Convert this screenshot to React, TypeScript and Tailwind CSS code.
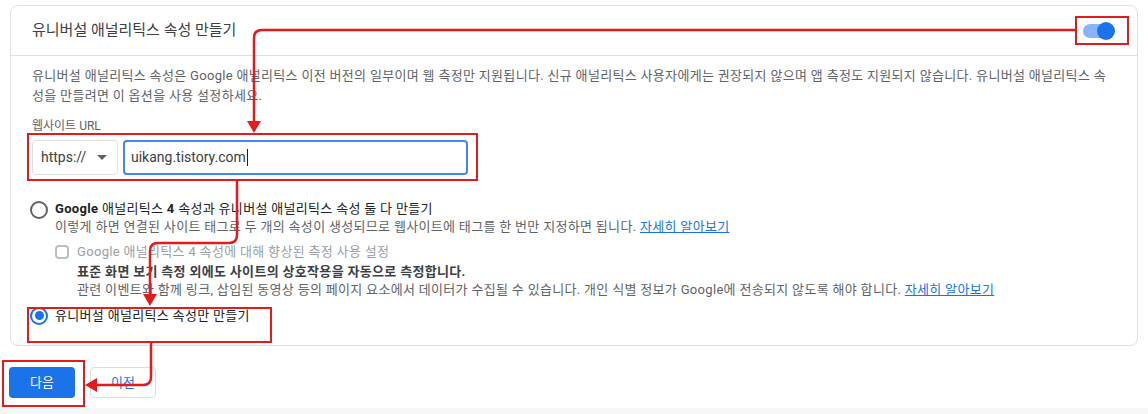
import React from 'react';

const font = { fontFamily: 'Roboto, "Noto Sans CJK KR", sans-serif' };

function Arrows() {
  return (
    <svg className="absolute inset-0 pointer-events-none" width="1148" height="414" viewBox="0 0 1148 414" fill="none">
      <g stroke="#e31b1b" strokeWidth="2">
        <rect x="1076" y="17" width="52" height="27" />
        <rect x="28" y="134" width="449" height="46" />
        <rect x="28" y="308" width="243" height="34" />
        <rect x="3" y="361" width="81" height="45" />
      </g>
      <g stroke="#e31b1b" strokeWidth="2.5" strokeLinejoin="round">
        <path d="M1076 30 H262 Q254 30 254 38 V122" />
        <path d="M237 180 V235 Q237 243 229 243 H158 Q150 243 150 251 V295" />
        <path d="M151 342 V377 Q151 385 143 385 H96" />
      </g>
      <g fill="#e31b1b">
        <polygon points="247,121 261,121 254,133" />
        <polygon points="143,294 157,294 150,306" />
        <polygon points="97,378 97,392 85,385" />
      </g>
    </svg>
  );
}

function Radio({ checked }: { checked?: boolean }) {
  return (
    <span
      className={`flex h-[18px] w-[18px] shrink-0 items-center justify-center rounded-full border-2 ${checked ? 'border-[#1a73e8]' : 'border-[#5f6368]'}`}
    >
      {checked && <span className="h-[9px] w-[9px] rounded-full bg-[#1a73e8]" />}
    </span>
  );
}

export default function App() {
  return (
    <div className="relative h-[414px] w-[1148px] overflow-hidden bg-white text-[13px]" style={font}>
      <div className="ml-[10px] mt-[5px] h-[341px] w-[1128px] rounded-lg border border-[#e0e0e0] bg-white">
        <div className="flex h-[50px] items-center justify-between border-b border-[#e0e0e0] pl-[21px] pr-[24px]">
          <span className="text-[15px] text-[#3c4043]">유니버설 애널리틱스 속성 만들기</span>
          <span className="relative flex h-[14px] w-[30px] items-center rounded-full bg-[#8ab4f8]">
            <span className="absolute right-[-2px] h-[18px] w-[18px] rounded-full bg-[#1a73e8]" />
          </span>
        </div>

        <div className="pl-[21px] pr-[26px] pt-[10px] tracking-[0.32px]">
          <p className="leading-[20px] text-[#5f6368]">
            유니버설 애널리틱스 속성은 Google 애널리틱스 이전 버전의 일부이며 웹 측정만 지원됩니다. 신규 애널리틱스 사용자에게는 권장되지 않으며 앱 측정도 지원되지 않습니다. 유니버설 애널리틱스 속성을 만들려면 이 옵션을 사용 설정하세요.
          </p>

          <div className="mt-[12px] text-[12px] leading-[16px] tracking-normal text-[#5f6368]">웹사이트 URL</div>

          <div className="mt-[6px] flex gap-[5px] tracking-normal">
            <div className="flex h-[35px] w-[86px] items-center justify-between rounded border border-[#e0e0e0] pl-[8px] pr-[10px] text-[14px] text-[#3c4043]">
              <span>https://</span>
              <span className="h-0 w-0 border-x-[5px] border-t-[5px] border-x-transparent border-t-[#5f6368]" />
            </div>
            <div className="flex h-[35px] w-[345px] items-center rounded border-2 border-[#4285f4] px-[6px] text-[14px] text-[#3c4043]">
              uikang.tistory.com<span className="ml-px h-[17px] w-px bg-[#202124]" />
            </div>
          </div>

          <div className="mt-[25px] flex items-start gap-[7px]">
            <span className="ml-[-2px] mt-[1px]"><Radio /></span>
            <div className="leading-[18px]">
              <div className="text-[#202124]">
                <b className="font-bold">Google</b> 애널리틱스 <b className="font-bold">4</b> 속성과 유니버설 애널리틱스 속성 둘 다 만들기
              </div>
              <div className="text-[#5f6368]">
                이렇게 하면 연결된 사이트 태그로 두 개의 속성이 생성되므로 웹사이트에 태그를 한 번만 지정하면 됩니다.{' '}
                <span className="text-[#1a73e8] underline">자세히 알아보기</span>
              </div>

              <div className="mt-[7px] flex items-center gap-[8px]">
                <span className="h-[14px] w-[14px] rounded-sm border-2 border-[#bdbdbd]" />
                <span className="text-[#9aa0a6]">Google 애널리틱스 4 속성에 대해 향상된 측정 사용 설정</span>
              </div>
              <div className="ml-[22px] mt-[2px] font-bold text-[#3c4043]">표준 화면 보기 측정 외에도 사이트의 상호작용을 자동으로 측정합니다.</div>
              <div className="ml-[22px] text-[#5f6368]">
                관련 이벤트와 함께 링크, 삽입된 동영상 등의 페이지 요소에서 데이터가 수집될 수 있습니다. 개인 식별 정보가 Google에 전송되지 않도록 해야 합니다.{' '}
                <span className="text-[#1a73e8] underline">자세히 알아보기</span>
              </div>
            </div>
          </div>

          <div className="mt-[7px] flex items-center gap-[7px]">
            <span className="ml-[-2px]"><Radio checked /></span>
            <span className="text-[#202124]">유니버설 애널리틱스 속성만 만들기</span>
          </div>
        </div>
      </div>

      <div className="ml-[9px] mt-[21px] flex gap-[15px]">
        <button className="h-[31px] w-[66px] rounded bg-[#1a73e8] text-[13px] text-white">다음</button>
        <button className="h-[31px] w-[66px] rounded border border-[#dadce0] bg-white text-[13px] text-[#1a73e8]">이전</button>
      </div>

      <div className="absolute bottom-0 left-0 h-[6px] w-full bg-[#f6f7f9]" />

      <Arrows />
    </div>
  );
}
